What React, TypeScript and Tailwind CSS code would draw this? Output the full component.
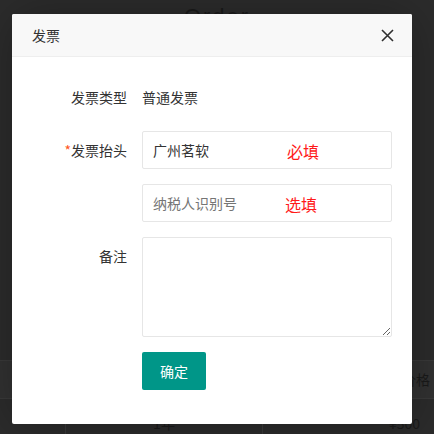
import React from "react";

const font = '"Noto Sans CJK SC", "Noto Sans", sans-serif';

export default function App() {
  return (
    <div
      className="relative w-[434px] h-[434px] overflow-hidden bg-[#2c2c2c]"
      style={{ fontFamily: font }}
    >
      {/* background page (behind the shade) */}
      <div className="flex flex-col h-full">
        <div className="h-[367px] flex justify-center">
          <span className="text-[22px] leading-[22px] tracking-[2px] text-[#1a1a1a] pt-[6px] font-['Liberation_Sans',sans-serif]">
            Order
          </span>
        </div>
        <div className="h-[40px] grid grid-cols-[66px_197px_1fr] bg-[#323232] border-y border-[#3a3a3a]">
          <div className="border-r border-[#3a3a3a]" />
          <div className="border-r border-[#3a3a3a]" />
          <div className="flex items-center justify-end pr-[4px] text-[14px] text-[#1a1a1a]">价格</div>
        </div>
        <div className="flex-1 grid grid-cols-[66px_197px_1fr]">
          <div className="border-r border-[#3a3a3a]" />
          <div className="border-r border-[#3a3a3a] flex justify-center pt-[14px] text-[14px] text-[#1a1a1a]">1年</div>
          <div className="flex justify-end pr-[14px] pt-[14px] text-[14px] text-[#1a1a1a]">¥500</div>
        </div>
      </div>

      {/* modal */}
      <div className="absolute left-[12px] top-[14px] w-[400px] h-[410px] bg-white rounded-[2px] shadow-[1px_1px_50px_rgba(0,0,0,0.3)] flex flex-col">
        <div className="h-[43px] shrink-0 bg-[#f8f8f8] border-b border-[#eeeeee] rounded-t-[2px] flex items-center justify-between pl-[20px] pr-[18px]">
          <span className="text-[14px] text-[#333333]">发票</span>
          <svg width="13" height="13" viewBox="0 0 13 13" className="mt-[1px]">
            <path d="M1 1 L12 12 M12 1 L1 12" stroke="#2f2f2f" strokeWidth="1.6" fill="none" />
          </svg>
        </div>

        <div className="flex flex-col gap-[15px] px-[20px] pt-[21px]">
          <div className="flex h-[38px]">
            <div className="w-[110px] shrink-0 pr-[15px] text-right text-[14px] leading-[38px] text-[#333333]">
              发票类型
            </div>
            <div className="text-[14px] leading-[38px] text-[#333333]">普通发票</div>
          </div>

          <div className="flex h-[38px]">
            <div className="w-[110px] shrink-0 pr-[15px] text-right text-[14px] leading-[38px] text-[#333333]">
              <span className="text-[#ff5722]">*</span>发票抬头
            </div>
            <div className="relative flex-1">
              <input
                defaultValue="广州茗软"
                className="w-full h-[38px] border border-[#e6e6e6] rounded-[2px] pl-[10px] text-[14px] text-[#333333] outline-none"
                style={{ fontFamily: font }}
              />
              <span className="absolute left-[145px] top-[8px] text-[16px] leading-[24px] text-[#ff1a1a]">必填</span>
            </div>
          </div>

          <div className="flex h-[38px]">
            <div className="w-[110px] shrink-0" />
            <div className="relative flex-1">
              <input
                placeholder="纳税人识别号"
                className="w-full h-[38px] border border-[#e6e6e6] rounded-[2px] pl-[10px] text-[14px] text-[#333333] placeholder:text-[#757575] outline-none"
                style={{ fontFamily: font }}
              />
              <span className="absolute left-[143px] top-[8px] text-[16px] leading-[24px] text-[#ff1a1a]">选填</span>
            </div>
          </div>

          <div className="flex h-[100px]">
            <div className="w-[110px] shrink-0 pr-[15px] text-right text-[14px] leading-[38px] text-[#333333]">
              备注
            </div>
            <textarea className="flex-1 h-[100px] border border-[#e6e6e6] rounded-[2px] outline-none resize" />
          </div>

          <div className="flex">
            <div className="w-[110px] shrink-0" />
            <button className="h-[38px] px-[18px] bg-[#009688] text-white text-[14px] rounded-[2px]">
              确定
            </button>
          </div>
        </div>
      </div>
    </div>
  );
}
